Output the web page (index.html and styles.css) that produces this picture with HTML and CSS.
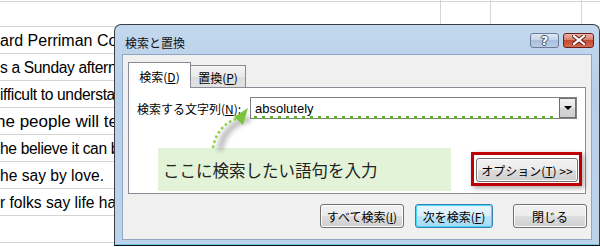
FILE: index.html
```html
<!DOCTYPE html>
<html lang="ja">
<head>
    <meta charset="UTF-8">
    <meta name="viewport" content="width=device-width, initial-scale=1.0">
    <title>検索と置換</title>
    <link rel="stylesheet" href="styles.css">
</head>
<body>

    <!-- Worksheet behind the dialog -->
    <div class="sheet">
        <div class="row first"></div>
        <div class="row wide"><span class="cell">ard Perriman Co</span></div>
        <div class="row narrow"><span class="cell">s a Sunday aftern</span></div>
        <div class="row narrow"><span class="cell">ifficult to understa</span></div>
        <div class="row big"><span class="cell">he people will te</span></div>
        <div class="row narrow"><span class="cell">he believe it can b</span></div>
        <div class="row"><span class="cell">he say by love.</span></div>
        <div class="row"><span class="cell">r folks say life ha</span></div>
        <div class="row"></div>
    </div>

    <!-- Find and replace window -->
    <div class="dialog">
        <div class="titlebar">
            <span class="title">検索と置換</span>
            <div class="caption-btns">
                <span class="cap help">?</span>
                <span class="cap close">
                    <svg width="14" height="10" viewBox="0 0 14 10">
                        <path d="M2 1 L12 9 M12 1 L2 9" stroke="#5a1c12" stroke-width="4" stroke-linecap="square"/>
                        <path d="M2 1 L12 9 M12 1 L2 9" stroke="#fff" stroke-width="2.2" stroke-linecap="square"/>
                    </svg>
                </span>
            </div>
        </div>

        <div class="client">
            <div class="tabs">
                <span class="tab active">検索(<u>D</u>)</span>
                <span class="tab">置換(<u>P</u>)</span>
            </div>
            <div class="panel">
                <div class="find-row">
                    <label class="find-label">検索する文字列(<u>N</u>):</label>
                    <div class="combo">
                        <span class="combo-text">absolutely</span>
                        <span class="drop"><span class="caret"></span></span>
                    </div>
                </div>
                <div class="opt-row">
                    <div class="highlight">
                        <button class="btn opt-btn">オプション(<u>T</u>) &gt;&gt;</button>
                    </div>
                </div>
            </div>
            <div class="actions">
                <button class="btn all-btn">すべて検索(<u>I</u>)</button>
                <button class="btn next-btn">次を検索(<u>F</u>)</button>
                <button class="btn close-btn">閉じる</button>
            </div>

            <div class="callout">ここに検索したい語句を入力</div>
        </div>
    </div>

    <!-- Annotation pointer -->
    <svg class="pointer" width="600" height="247" viewBox="0 0 600 247">
        <defs>
            <filter id="blur" x="-50%" y="-50%" width="200%" height="200%">
                <feGaussianBlur stdDeviation="2.5"/>
            </filter>
        </defs>
        <path d="M220 150 C222 134 234 121 250 119" fill="none" stroke="#000" stroke-opacity="0.28" stroke-width="6" filter="url(#blur)"/>
        <line x1="254" y1="117.5" x2="554" y2="117.5" stroke="#64ad33" stroke-width="3" stroke-dasharray="3 5"/>
        <path d="M213 148 C215 134 224 123 236 119" fill="none" stroke="#8fd24f" stroke-width="2.6" stroke-dasharray="2.6 2.6"/>
        <polygon points="248,108 234,117 243,125" fill="#7cc43c"/>
    </svg>

</body>
</html>
```

FILE: styles.css
```css
* { margin: 0; padding: 0; box-sizing: border-box; }
body {
    width: 600px;
    height: 247px;
    overflow: hidden;
    background: #fff;
    font-family: 'Liberation Sans', Arial, sans-serif;
    position: relative;
}

/* Worksheet */
.sheet {
    padding-top: 1px;
    background:
        linear-gradient(#d4d4d4, #d4d4d4) 440px 0 / 1px 100% no-repeat,
        linear-gradient(#d4d4d4, #d4d4d4) 490px 0 / 1px 100% no-repeat,
        linear-gradient(#d4d4d4, #d4d4d4) 581px 0 / 1px 100% no-repeat;
}
.row {
    height: 27px;
    border-bottom: 1px solid #d4d4d4;
    font-size: 15.6px;
    line-height: 28px;
    color: #000;
    white-space: nowrap;
}
.row.first {
    height: 26px;
    border-top: 1px solid #d4d4d4;
}
.row.wide { font-size: 16px; }
.row.narrow { letter-spacing: -0.35px; }
.row.big {
    font-size: 17px;
    text-indent: -4px;
}
.cell {
    display: block;
    width: 114px;
    overflow: hidden;
}

/* Dialog window */
.dialog {
    position: absolute;
    left: 114px;
    top: 24px;
    width: 486px;
    height: 222px;
    border: 1px solid #3b3f45;
    border-bottom-color: #111;
    border-radius: 7px 7px 0 0;
    background: linear-gradient(#c3d8ee, #b7cfe9 30%, #bcd3ec);
    box-shadow: inset 0 -1px 0 #6fc6e0;
    padding: 0 7px 5px;
    font-family: 'Noto Sans CJK JP', sans-serif;
    font-size: 12px;
    color: #000;
}
.titlebar {
    height: 29px;
    display: flex;
    align-items: center;
    justify-content: space-between;
    padding-left: 3px;
}
.title {
    font-size: 12px;
    line-height: 1;
    margin-top: 7px;
    color: #111;
}
.caption-btns {
    display: flex;
    gap: 4px;
    margin-right: -2px;
    margin-top: 1px;
}
.cap {
    height: 15px;
    border-radius: 3px;
    display: flex;
    align-items: center;
    justify-content: center;
}
.help {
    width: 29px;
    border: 1px solid #6b7d94;
    background: linear-gradient(#dfe9f5, #c4d4e8 45%, #a9bfdb 50%, #b9cde5);
    color: #fff;
    font-family: 'DejaVu Sans', sans-serif;
    font-weight: bold;
    font-size: 13px;
    text-shadow: -1px 0 #3f4f66, 1px 0 #3f4f66, 0 -1px #3f4f66, 0 1px #3f4f66;
}
.close {
    width: 31px;
    border: 1px solid #6a231a;
    background: linear-gradient(#eeb2a4, #d9806d 45%, #c44a34 50%, #d36a4f);
}

/* Client area */
.client {
    position: relative;
    height: 186px;
    border: 1px solid #8fa7c2;
    background: #f0f0f0;
    padding: 7px 5px 0;
}
.tabs {
    height: 25px;
    display: flex;
    align-items: flex-end;
}
.tab {
    display: flex;
    align-items: center;
    justify-content: center;
    border: 1px solid #898c95;
    border-bottom: none;
}
.tab.active {
    width: 63px;
    height: 26px;
    margin-bottom: -1px;
    background: #fff;
    position: relative;
    z-index: 1;
    padding-top: 1px;
}
.tab:not(.active) {
    width: 55px;
    height: 22px;
    border-left: none;
    background: linear-gradient(#f4f4f4, #e9e9e9 50%, #dcdcdc 50%, #e2e2e2);
    padding-top: 1px;
}
.panel {
    height: 107px;
    border: 1px solid #898c95;
    background: #fff;
}
.find-row {
    display: flex;
    align-items: center;
    margin-top: 9px;
    padding-left: 8px;
}
.find-label {
    width: 113px;
    white-space: nowrap;
}
.combo {
    width: 327px;
    height: 22px;
    border: 1px solid #7f8389;
    display: flex;
    align-items: center;
    justify-content: space-between;
}
.combo-text {
    font-family: 'Liberation Sans', Arial, sans-serif;
    font-size: 13px;
    padding-left: 4px;
}
.drop {
    width: 17px;
    height: 20px;
    border: 1px solid #707070;
    background: linear-gradient(#f2f2f2, #e6e6e6 50%, #d6d6d6 50%, #cfcfcf);
    display: flex;
    align-items: center;
    justify-content: center;
}
.caret {
    width: 0;
    height: 0;
    border-left: 4px solid transparent;
    border-right: 4px solid transparent;
    border-top: 4px solid #000;
}
.opt-row {
    display: flex;
    justify-content: flex-end;
    margin-top: 33px;
    padding-right: 3px;
}
.highlight {
    border: 3px solid #c00000;
    padding: 3px 1px 1px 2px;
    box-shadow: 2px 2px 5px rgba(0, 0, 0, 0.35);
    background: #fff;
}

/* Buttons */
.btn {
    height: 24px;
    border: 1px solid #707070;
    border-radius: 3px;
    background: linear-gradient(#f2f2f2, #ebebeb 50%, #dddddd 50%, #cfcfcf);
    box-shadow: inset 0 0 0 1px #fcfcfc;
    font-family: 'Noto Sans CJK JP', sans-serif;
    font-size: 12px;
    color: #000;
    display: flex;
    align-items: center;
    justify-content: center;
}
.opt-btn { width: 102px; }
.actions {
    display: flex;
    justify-content: flex-end;
    margin-top: 10px;
    margin-right: -1px;
}
.all-btn { width: 84px; }
.next-btn {
    width: 78px;
    margin-left: 11px;
    border-color: #3c7fb1;
    box-shadow: inset 0 0 0 1px #48d8fb;
    background: linear-gradient(#eaf6fd, #d9f0fc 50%, #bee6fd 50%, #a7d9f5);
}
.close-btn {
    width: 74px;
    margin-left: 20px;
}

/* Annotation */
.callout {
    position: absolute;
    left: 35px;
    top: 93px;
    width: 293px;
    height: 43px;
    background: #e2f3d8;
    font-size: 16.5px;
    color: #222;
    display: flex;
    align-items: center;
    padding-left: 5px;
    padding-top: 1px;
}
.pointer {
    position: absolute;
    left: 0;
    top: 0;
    pointer-events: none;
}
```
